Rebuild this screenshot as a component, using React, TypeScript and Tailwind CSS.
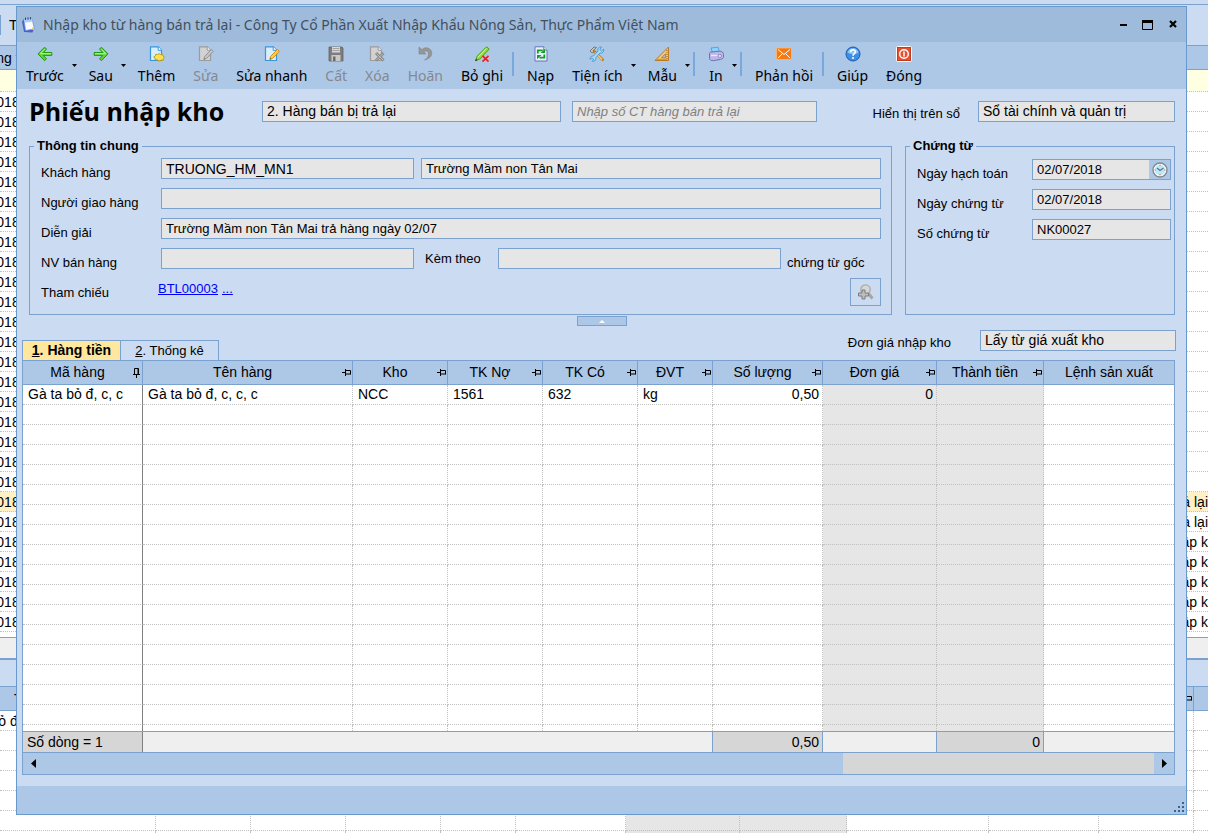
import React from 'react';

const line = 'border-[#7ba1cf]';
const field = 'h-[21px] min-w-0 appearance-none rounded-none border border-[#7ba1cf] bg-[#e6e6e6] px-1 text-black outline-none';

/* ---------- icons ---------- */

const Svg = ({ children }) => (
  <svg width="16" height="16" viewBox="0 0 16 16" className="block" aria-hidden="true">
    {children}
  </svg>
);

const ArrowLeft = () => (
  <Svg>
    <path d="M7.6 1.2 1 7.9l6.6 6.8 1.9-1.9-3.2-3.4h8.5V6.5H6.3l3.2-3.4z" fill="#5fd13c" stroke="#1f9a14" />
    <path d="M3 7.9 7.6 3.2M3.5 7.7h10.6" stroke="#b8f29a" fill="none" />
  </Svg>
);

const ArrowRight = () => (
  <Svg>
    <path d="M8.4 1.2 15 7.9l-6.6 6.8-1.9-1.9 3.2-3.4H1.2V6.5h8.5L6.5 3.1z" fill="#5fd13c" stroke="#1f9a14" />
    <path d="M8.4 3.2 12.8 7.7H2" stroke="#b8f29a" fill="none" />
  </Svg>
);

const Sheet = ({ gray }) => (
  <>
    <path
      d="M1.5.8h7.8l3.2 3.4v10.3h-11z"
      fill={gray ? '#d2d2d2' : '#d9eefc'}
      stroke={gray ? '#9c9c9c' : '#3795dc'}
      strokeWidth="1.2"
    />
    <path d="M9.2.8v3.5h3.4" fill={gray ? '#efefef' : '#fff'} stroke={gray ? '#9c9c9c' : '#3795dc'} />
  </>
);

const AddIcon = () => (
  <Svg>
    <Sheet gray={false} />
    <path d="m10 7.6 1.6 1.1 2-.3.3 1.6 1.6 1-1.3 1.4.2 1.9-2.2-.2-2.2 1-1.6-1.3-2.4.1.1-1.9L4.7 11l1.7-1.1.3-1.6 2 .2z" fill="#ffe24f" stroke="#bb9712" strokeWidth=".9" />
  </Svg>
);

const EditIcon = ({ gray }) => (
  <Svg>
    <Sheet gray={gray} />
    <path d="m13.3 3.5 2 1.8-6.6 7-2.9 1.2.8-3z" fill={gray ? '#c4c4c4' : '#ffd23c'} stroke={gray ? '#8f8f8f' : '#d08312'} strokeWidth=".9" />
    <path d="m5.8 13.5.5-1.5 1 .9z" fill={gray ? '#777' : '#53430e'} />
  </Svg>
);

const SaveIcon = () => (
  <Svg>
    <path d="M1 1h13l1 1v13H1z" fill="#7d7d7d" stroke="#666" strokeWidth=".8" />
    <path d="M4 1h8v5.5H4z" fill="#d8d8d8" />
    <path d="M4.5 2.5h7M4.5 4.5h7" stroke="#a3a3a3" />
    <path d="M3.5 9h9v6h-9z" fill="#c9c9c9" />
    <path d="M5 10.5h2.5V15H5z" fill="#6b6b6b" />
  </Svg>
);

const DeleteIcon = () => (
  <Svg>
    <Sheet gray />
    <path d="m7 7 7.5 7.5M14.5 7 7 14.5" stroke="#8a8a8a" strokeWidth="3" />
    <path d="m7.5 7.5 6.5 6.5M14 7.5 7.5 14" stroke="#c6c6c6" strokeWidth=".9" />
  </Svg>
);

const UndoIcon = () => (
  <Svg>
    <path d="M2 1v7h7L6.8 5.8C9.5 4.2 11.6 5.4 11.5 8c0 2.5-1.5 4.5-4 6 5-1.2 7.6-3.9 7.2-7.5C14.2 2 8.5.2 4.8 3.6z" fill="#969696" stroke="#858585" strokeWidth=".6" />
  </Svg>
);

const UnpostIcon = () => (
  <Svg>
    <path d="m12.5.8 2.7 2.2-9 9.8-4.2 1.7 1-4.2z" fill="#8be03c" stroke="#4a9e13" />
    <path d="m12.3 2.5-8.5 9" stroke="#cff99f" />
    <path d="m1 15.2.9-2.5 1.7 1.5z" fill="#333" />
    <path d="m8.5 9.8 6 5.7M14.5 9.8l-6 5.7" stroke="#f01818" strokeWidth="1.7" />
  </Svg>
);

const ReloadIcon = () => (
  <Svg>
    <path d="M2 .8h8.8l3.2 3.2v11H2z" fill="#eef4ff" stroke="#6672b8" />
    <path d="M10.8.8V4H14" fill="#fff" stroke="#6672b8" />
    <path d="M4.8 7.5V4.3h4.9M11.3 8.5v3.2H6.4" fill="none" stroke="#11a024" strokeWidth="1.8" />
    <path d="M7.5 7h4.5V2.8zM8.5 9H4v4.2z" fill="#11a024" />
  </Svg>
);

const ToolsIcon = () => (
  <Svg>
    <path d="m4.5 4.5 9.2 9.2" stroke="#b98432" strokeWidth="2.8" strokeLinecap="round" />
    <path d="m6 6.3 7.2 7.2" stroke="#ffd07a" strokeWidth="1.2" />
    <path d="M1 5 5 1l2.5.5L4 4.8l1.2 1.4L3 7z" fill="#c9c4bc" stroke="#6f685e" strokeWidth=".8" />
    <path d="M14.6 3.2 12.5 5l-1.7-1.5L12.5 1C9.5.6 8.3 3 9 5l-4.5 5C2.5 9.6.9 11 1 13.2l2-1.2 1.6 1.3-1.2 2c2.5.3 3.9-1.5 3.4-3.7L11 7c2.5.6 4.3-1.3 3.6-3.8z" fill="#a9dbf7" stroke="#3b90c8" strokeWidth=".8" />
  </Svg>
);

const TemplateIcon = () => (
  <Svg>
    <path d="M14.5 1v13.5H1z" fill="#f7c873" stroke="#b87a24" />
    <path d="M11.5 7.8v4H7.6z" fill="#adc7e7" stroke="#b87a24" strokeWidth=".9" />
    <path d="M13 4v9.5M3.5 13.3h10" stroke="#8f5b14" strokeDasharray="1 1" />
  </Svg>
);

const PrintIcon = () => (
  <Svg>
    <path d="m3 2 7-.8 1.5 5.3L5 8z" fill="#8fd3fb" stroke="#3f9ad6" strokeWidth=".8" />
    <path d="M1.5 7.5c0-1 1-1.5 2-1.5l8-.8c2.5 0 4 1.3 4 3.3v2.3c0 1.5-1.5 2.3-3 2.6l-7 1.2c-2.3.4-4-.6-4-2.4z" fill="#bbb7e6" stroke="#6b67ad" strokeWidth=".9" />
    <path d="M3 9.5h6.5" stroke="#ece9ff" strokeWidth="1.3" />
    <circle cx="11.8" cy="10" r="1.7" fill="#dedcf7" stroke="#7a76b8" strokeWidth=".7" />
  </Svg>
);

const MailIcon = () => (
  <Svg>
    <rect x=".5" y="2" width="15" height="11.5" fill="#f47a14" stroke="#ffb978" strokeWidth=".8" />
    <path d="m2 3.5 6 5 6-5M2 12.2l4.3-4.5M14 12.2 9.7 7.7" fill="none" stroke="#fff" />
  </Svg>
);

const HelpIcon = () => (
  <Svg>
    <circle cx="8" cy="8" r="7" fill="#3d8fe6" stroke="#1a5bac" />
    <path d="M2.5 6.8a5.6 5.6 0 0 1 11 0c-3 1.6-8 1.6-11 0z" fill="#8cc2f8" />
    <path d="M5.6 6.3c0-3.3 5-3.2 4.8-.3C10.3 7.6 8 7.7 8 9.7" fill="none" stroke="#fff" strokeWidth="1.6" />
    <circle cx="8" cy="12" r="1" fill="#fff" />
  </Svg>
);

const CloseIcon = () => (
  <Svg>
    <rect x=".5" y=".5" width="15" height="15" rx="1" fill="#e5502e" stroke="#fff" />
    <rect x="1.5" y="1.5" width="13" height="13" fill="none" stroke="#b93317" strokeWidth=".7" />
    <circle cx="8" cy="8" r="4.3" fill="none" stroke="#fff" strokeWidth="1.4" />
    <path d="M8 5.5v5" stroke="#fff" strokeWidth="1.5" />
  </Svg>
);

const AppIcon = () => (
  <svg width="16" height="18" viewBox="0 0 16 18" aria-hidden="true">
    <path d="M1 5.5 3 3l2 10.5 7.5.5-1 2.5-8.5-.5z" fill="#4a5fd0" />
    <path d="m3 3.5 8-1 2.5 10.5-9 1.5z" fill="#f8fbff" stroke="#6c8fdb" strokeWidth=".8" />
    <path d="M3 3.5 10.8 2.4l.8 3-8 1.3z" fill="#a7cdf3" />
    <path d="M4.5 1.5v2.5M7 1.3v2.5M9.5 1v2.5" stroke="#3d4a78" />
    <path d="m11.5 11 2 2.2-2.8.6z" fill="#f5c84c" />
  </svg>
);

const ClockIcon = () => (
  <Svg>
    <circle cx="8" cy="8" r="7" fill="#dff5fb" stroke="#85898f" strokeWidth="1.4" />
    <circle cx="8" cy="8" r="5.6" fill="#b9e9f7" stroke="#fff" strokeWidth=".8" />
    <path d="m5 6 3 2.5L11.5 6" fill="none" stroke="#56707d" strokeWidth="1.1" />
    <path d="M8 2.6v1.2M8 12v1.4M2.6 8h1.2M12.2 8h1.2" stroke="#d66" />
  </Svg>
);

const ZoomIcon = () => (
  <Svg>
    <path d="m10 9 4.5 5.5" stroke="#a6a6a6" strokeWidth="3" />
    <circle cx="7.5" cy="5.5" r="4.7" fill="#d6d6d6" stroke="#a9a9a9" strokeWidth="1.3" />
    <path d="M4 6h3v3h3.5v3H7v3H4v-3H.5V9H4z" fill="#bdbdbd" stroke="#7d7d7d" />
  </Svg>
);

const Pin = () => (
  <svg width="10" height="10" viewBox="0 0 10 10" className="shrink-0" aria-hidden="true">
    <path d="M0 4.5h3M3.5 1v7M3.5 2.5h5v4M3.5 6h5" fill="none" stroke="#000" />
  </svg>
);

const PinDown = () => (
  <svg width="10" height="10" viewBox="0 0 10 10" className="shrink-0" aria-hidden="true">
    <path d="M1 6.5h7M2.5 6V.5h4V6M6 1v5M4.5 7v3" fill="none" stroke="#000" />
  </svg>
);

const Caret = () => (
  <svg width="5" height="3" viewBox="0 0 5 3" className="mt-[22px] w-[5px]" aria-hidden="true">
    <path d="M0 0h5L2.5 3z" />
  </svg>
);

/* ---------- toolbar ---------- */

const tools = [
  { label: 'Trước', icon: <ArrowLeft />, caret: true },
  { label: 'Sau', icon: <ArrowRight />, caret: true },
  { label: 'Thêm', icon: <AddIcon /> },
  { label: 'Sửa', icon: <EditIcon gray />, disabled: true },
  { label: 'Sửa nhanh', icon: <EditIcon gray={false} /> },
  { label: 'Cất', icon: <SaveIcon />, disabled: true },
  { label: 'Xóa', icon: <DeleteIcon />, disabled: true },
  { label: 'Hoãn', icon: <UndoIcon />, disabled: true },
  { label: 'Bỏ ghi', icon: <UnpostIcon />, sep: true },
  { label: 'Nạp', icon: <ReloadIcon /> },
  { label: 'Tiện ích', icon: <ToolsIcon />, caret: true },
  { label: 'Mẫu', icon: <TemplateIcon />, caret: true, sep: true },
  { label: 'In', icon: <PrintIcon />, caret: true, sep: true },
  { label: 'Phản hồi', icon: <MailIcon />, sep: true },
  { label: 'Giúp', icon: <HelpIcon /> },
  { label: 'Đóng', icon: <CloseIcon /> },
];

function Toolbar() {
  return (
    <div className="flex h-[47px] shrink-0 items-start bg-[#adc7e7] font-['Noto_Sans',sans-serif] text-sm">
      {tools.map((t) => (
        <React.Fragment key={t.label}>
          <button type="button" disabled={t.disabled} className="flex flex-col items-center px-[9px] pt-1 whitespace-nowrap disabled:text-[#85898e]">
            {t.icon}
            <span className="mt-1 leading-5">{t.label}</span>
          </button>
          {t.caret && <span className="-ml-px w-2"><Caret /></span>}
          {t.sep && <span className="mt-2.5 mr-1 h-6 w-0.5 bg-[#7aa7dc]"></span>}
        </React.Fragment>
      ))}
    </div>
  );
}

/* ---------- detail grid ---------- */

const columns = [
  { title: 'Mã hàng', width: 'w-[120px]', value: 'Gà ta bỏ đ, c, c' },
  { title: 'Tên hàng', width: 'w-[210px]', value: 'Gà ta bỏ đ, c, c, c' },
  { title: 'Kho', width: 'w-[95px]', value: 'NCC' },
  { title: 'TK Nợ', width: 'w-[95px]', value: '1561' },
  { title: 'TK Có', width: 'w-[95px]', value: '632' },
  { title: 'ĐVT', width: 'w-[75px]', value: 'kg' },
  { title: 'Số lượng', width: 'w-[110px]', value: '0,50', right: true },
  { title: 'Đơn giá', width: 'w-[114px]', value: '0', right: true, locked: true },
  { title: 'Thành tiền', width: 'w-[107px]', value: '', right: true, locked: true },
  { title: 'Lệnh sản xuất', width: '', value: '' },
];

const emptyRows = Array.from({ length: 17 }, (_, i) => i);

const cellClass = (col, i) =>
  [
    'h-5 border-b border-b-[#c0c0c0] [border-bottom-style:dotted] p-0 leading-[19px] whitespace-nowrap',
    i === 0 ? 'border-r border-r-[#808080] [border-right-style:solid]' : '',
    i > 0 && i < 9 ? 'border-r border-r-[#c0c0c0] [border-right-style:dotted]' : '',
    col.right ? 'pr-[3px] text-right' : 'pl-[5px] text-left',
    col.locked ? 'bg-[#e6e6e6]' : '',
  ].join(' ');

function DetailGrid() {
  return (
    <div className={`flex min-h-0 flex-1 flex-col border ${line} bg-white text-sm`}>
      <div className="min-h-0 flex-1 overflow-hidden">
        <table className="w-full table-fixed border-separate border-spacing-0">
          <thead>
            <tr>
              {columns.map((c, i) => (
                <th key={c.title} className={`${c.width} h-6 border-b ${line} bg-[#adc7e7] p-0 font-normal ${i < 9 ? 'border-r' : ''}`}>
                  <div className="flex items-center">
                    <span className="flex-1 text-center leading-[23px] whitespace-nowrap">{c.title}</span>
                    {i === 0 && <PinDown />}
                    {i > 0 && i < 9 && <Pin />}
                  </div>
                </th>
              ))}
            </tr>
          </thead>
          <tbody>
            <tr>
              {columns.map((c, i) => (
                <td key={c.title} className={cellClass(c, i)}>{c.value}</td>
              ))}
            </tr>
            {emptyRows.map((r) => (
              <tr key={r}>
                {columns.map((c, i) => (
                  <td key={c.title} className={cellClass(c, i)}></td>
                ))}
              </tr>
            ))}
          </tbody>
        </table>
      </div>

      <table className={`w-full shrink-0 table-fixed border-separate border-spacing-0 border-y ${line}`}>
        <tbody>
          <tr>
            <td className="h-5 w-[120px] border-r border-[#808080] bg-[#d6d6d6] py-0 pr-0 pl-1 leading-5">Số dòng = 1</td>
            <td className={`w-[570px] border-r ${line} bg-[#efefef] p-0`}></td>
            <td className={`w-[110px] border-r ${line} bg-[#d6d6d6] py-0 pr-[3px] pl-0 text-right leading-5`}>0,50</td>
            <td className={`w-[114px] border-r ${line} bg-[#efefef] p-0`}></td>
            <td className={`w-[107px] border-r ${line} bg-[#d6d6d6] py-0 pr-[3px] pl-0 text-right leading-5`}>0</td>
            <td className="bg-[#efefef] p-0"></td>
          </tr>
        </tbody>
      </table>

      <div className="flex h-[21px] shrink-0 bg-[#adc7e7]">
        <button type="button" aria-label="Cuộn trái" className="flex w-5 items-center justify-center">
          <svg width="5" height="9" viewBox="0 0 5 9"><path d="M5 0v9L0 4.5z" /></svg>
        </button>
        <div className="flex flex-1 justify-end">
          <div className="w-[28%] bg-[#d6d6d6]"></div>
        </div>
        <button type="button" aria-label="Cuộn phải" className="flex w-5 items-center justify-center">
          <svg width="5" height="9" viewBox="0 0 5 9"><path d="M0 0v9l5-4.5z" /></svg>
        </button>
      </div>
    </div>
  );
}

/* ---------- list window that stays behind the voucher ---------- */

const listRight = { 20: 'ả lại', 21: 'ả lại', 22: 'ập k', 23: 'ập k', 24: 'ập k', 25: 'ập k', 26: 'ập k' };
const listRows = Array.from({ length: 27 }, (_, i) => i);
const lowerCols = ['w-[156px]', 'w-[95px]', 'w-[95px]', 'w-[95px]', 'w-[75px]', 'w-[110px]', 'w-[114px] bg-[#e6e6e6]', 'w-[107px] bg-[#e6e6e6]', 'w-[142px]', 'w-[110px]', 'w-[95px]'];

function ListWindow() {
  return (
    <div className="flex h-full flex-col overflow-hidden text-sm">
      <div className={`h-[5px] shrink-0 border-b ${line}`}></div>
      <div className="flex h-10 shrink-0 items-center">
        <span className="h-5 w-px bg-[#7ba1cf]"></span>
        <span className="pl-2">T</span>
      </div>
      <div className={`flex h-[25px] shrink-0 items-center border-y ${line} bg-[#adc7e7]`}>
        <span className="flex w-4 justify-center whitespace-nowrap">ng t</span>
      </div>
      <div className="h-[22px] shrink-0 border-b border-dotted border-[#c0c0c0] bg-[#ffffe1]"></div>
      {listRows.map((r) => (
        <div key={r} className={`flex h-5 shrink-0 items-center justify-between border-b border-dotted border-[#c0c0c0] ${r === 20 ? 'bg-[#fff0c6]' : 'bg-white'}`}>
          <span className="flex w-4 justify-center">018</span>
          <span className="flex w-6 justify-end whitespace-nowrap">{listRight[r]}</span>
        </div>
      ))}
      <div className="h-[5px] shrink-0 bg-white"></div>
      <div className={`h-[23px] shrink-0 border-t border-b-2 ${line} bg-[#efefef]`}></div>
      <div className="h-[26px] shrink-0"></div>
      <div className={`flex h-[25px] shrink-0 items-center justify-between border-y ${line} bg-[#adc7e7]`}>
        <span className="pl-3.5">T</span>
        <span className={`mr-3.5 flex h-full items-center border-r ${line}`}><Pin /></span>
      </div>
      {[0, 1, 2, 3, 4, 5, 6].map((r) => (
        <div key={r} className="flex h-5 shrink-0 bg-white">
          {lowerCols.map((w, i) => (
            <div key={i} className={`${w} shrink-0 border-r border-b border-dotted border-[#c0c0c0]`}>
              {r === 0 && i === 0 && <span className="flex w-4 justify-center whitespace-nowrap leading-5">ỏ đ</span>}
            </div>
          ))}
          <div className="flex-1 border-b border-dotted border-[#c0c0c0]"></div>
        </div>
      ))}
    </div>
  );
}

/* ---------- voucher window ---------- */

export default function App() {
  const rowLabel = 'w-[120px] shrink-0 pt-1 leading-[21px] whitespace-nowrap';
  const dateLabel = 'w-[115px] shrink-0 pt-1 leading-[21px] whitespace-nowrap';

  return (
    <div className="relative h-screen overflow-hidden bg-[#cbdbf1] font-['Liberation_Sans',Arial,sans-serif] text-[13px] text-black">
      <ListWindow />

      <div className="absolute top-1.5 right-[21px] bottom-[18px] left-4 flex flex-col border border-[#6799cc] bg-[#cbdbf1]">
        <header className="flex h-[35px] shrink-0 items-center bg-[#9ebbdb] pr-2 pl-1">
          <AppIcon />
          <h2 className="ml-1.5 flex-1 truncate font-['Noto_Sans',sans-serif] text-sm text-[#434f5c]">
            Nhập kho từ hàng bán trả lại - Công Ty Cổ Phần Xuất Nhập Khẩu Nông Sản, Thực Phẩm Việt Nam
          </h2>
          <div className="flex items-center gap-3.5">
            <button type="button" aria-label="Thu nhỏ">
              <svg width="8" height="10" viewBox="0 0 8 10"><path d="M0 4h7v2H0z" /></svg>
            </button>
            <button type="button" aria-label="Phóng to">
              <svg width="12" height="10" viewBox="0 0 12 10"><path d="M.5.5h10v9H.5z" fill="none" stroke="#000" /><path d="M0 0h11v3H0z" /></svg>
            </button>
            <button type="button" aria-label="Đóng cửa sổ">
              <svg width="10" height="10" viewBox="0 0 10 10"><path d="m2 1 6 6M8 1 2 7" stroke="#000" strokeWidth="2.2" /></svg>
            </button>
          </div>
        </header>

        <Toolbar />

        <div className="flex shrink-0 items-center pt-3 pr-[11px] pl-3">
          <h1 className="w-[233px] font-['Open_Sans',sans-serif] text-[25px] leading-[21px] font-bold whitespace-nowrap">Phiếu nhập kho</h1>
          <select aria-label="Loại phiếu nhập" className={`${field} w-[299px] text-sm leading-[19px]`}>
            <option>2. Hàng bán bị trả lại</option>
          </select>
          <input aria-label="Số chứng từ hàng bán trả lại" placeholder="Nhập số CT hàng bán trả lại" className={`${field} ml-[11px] w-[245px] placeholder:text-[#808080] placeholder:italic`} />
          <label htmlFor="book" className="mr-[18px] ml-auto pt-1 leading-[17px] whitespace-nowrap">Hiển thị trên sổ</label>
          <select id="book" className={`${field} w-[197px] text-sm leading-[19px]`}>
            <option>Sổ tài chính và quản trị</option>
          </select>
        </div>

        <div className="mt-3.5 flex shrink-0 gap-[13px] pr-[11px] pl-3">
          <fieldset className={`min-w-0 flex-1 border ${line} px-2.5 pb-2`}>
            <legend className="-ml-1.5 px-[3px] leading-5 font-bold">Thông tin chung</legend>
            <div className="flex flex-col gap-[9px] pt-0.5 pl-px">
              <div className="flex h-[21px] items-start">
                <label htmlFor="customer" className={rowLabel}>Khách hàng</label>
                <input id="customer" readOnly defaultValue="TRUONG_HM_MN1" className={`${field} w-[253px] text-sm`} />
                <input aria-label="Tên khách hàng" readOnly defaultValue="Trường Mầm non Tân Mai" className={`${field} ml-[7px] flex-1`} />
              </div>
              <div className="flex h-[21px] items-start">
                <label htmlFor="deliverer" className={rowLabel}>Người giao hàng</label>
                <input id="deliverer" readOnly className={`${field} flex-1`} />
              </div>
              <div className="flex h-[21px] items-start">
                <label htmlFor="memo" className={rowLabel}>Diễn giải</label>
                <input id="memo" readOnly defaultValue="Trường Mầm non Tân Mai trả hàng ngày 02/07" className={`${field} flex-1`} />
              </div>
              <div className="flex h-[21px] items-start">
                <label htmlFor="seller" className={rowLabel}>NV bán hàng</label>
                <input id="seller" readOnly className={`${field} w-[253px]`} />
                <label htmlFor="attach" className="w-[84px] shrink-0 pl-[11px] leading-[21px] whitespace-nowrap">Kèm theo</label>
                <input id="attach" readOnly className={`${field} flex-1`} />
                <span className="w-[100px] shrink-0 pt-1 pl-1.5 leading-[21px] whitespace-nowrap">chứng từ gốc</span>
              </div>
              <div className="flex h-7 items-start">
                <span className="w-[117px] shrink-0 pt-1 leading-[21px]">Tham chiếu</span>
                <a href="#" className="leading-[21px] text-[#0000ff] underline">BTL00003</a>
                <a href="#" className="ml-1 leading-[21px] text-[#0000ff] underline">...</a>
                <button type="button" aria-label="Xem chứng từ" className={`ml-auto flex h-7 w-[31px] items-center justify-center border ${line}`}>
                  <ZoomIcon />
                </button>
              </div>
            </div>
          </fieldset>

          <fieldset className={`w-[270px] min-w-0 shrink-0 border ${line} pr-[3px] pb-2 pl-[11px]`}>
            <legend className="-ml-[7px] px-[3px] leading-5 font-bold">Chứng từ</legend>
            <div className="flex flex-col gap-[9px] pt-[3px]">
              <div className="flex h-[21px] items-start">
                <label htmlFor="postDate" className={dateLabel}>Ngày hạch toán</label>
                <input id="postDate" readOnly defaultValue="02/07/2018" className={`${field} flex-1 border-r-0`} />
                <button type="button" aria-label="Chọn ngày" className={`flex h-[21px] w-[22px] items-center justify-center border border-l-0 ${line} bg-[#adc7e7]`}>
                  <ClockIcon />
                </button>
              </div>
              <div className="flex h-[21px] items-start">
                <label htmlFor="voucherDate" className={dateLabel}>Ngày chứng từ</label>
                <input id="voucherDate" readOnly defaultValue="02/07/2018" className={`${field} flex-1`} />
              </div>
              <div className="flex h-[21px] items-start">
                <label htmlFor="voucherNo" className={dateLabel}>Số chứng từ</label>
                <input id="voucherNo" readOnly defaultValue="NK00027" className={`${field} flex-1`} />
              </div>
            </div>
          </fieldset>
        </div>

        <button type="button" aria-label="Thu gọn" className={`mx-auto mt-px flex h-2.5 w-[50px] shrink-0 items-center justify-center border ${line} bg-[#adc7e7]`}>
          <svg width="6" height="3" viewBox="0 0 6 3"><path d="M0 3h6L3 0z" fill="#fff" /></svg>
        </button>

        <div className="flex shrink-0 items-end pt-1 pr-2.5 pl-[5px]">
          <div role="tablist" className="flex">
            <button type="button" role="tab" aria-selected="true" className={`h-5 w-[99px] border border-b-0 ${line} bg-[#ffe79e] text-sm leading-[19px] font-bold`}>
              <span className="underline">1</span>. Hàng tiền
            </button>
            <button type="button" role="tab" aria-selected="false" className={`h-5 w-[98px] border border-b-0 border-l-0 ${line} leading-[19px]`}>
              <span className="underline">2</span>. Thống kê
            </button>
          </div>
          <div className="mb-[9px] ml-auto flex items-center">
            <label htmlFor="price" className="mr-[29px] pt-1 leading-[17px] whitespace-nowrap">Đơn giá nhập kho</label>
            <select id="price" className={`${field} w-[196px] px-0.5 text-sm leading-[19px]`}>
              <option>Lấy từ giá xuất kho</option>
            </select>
          </div>
        </div>

        <div className="flex min-h-0 flex-1 flex-col pr-[11px] pb-[11px] pl-[5px]">
          <DetailGrid />
        </div>

        <footer className="flex h-7 shrink-0 items-end justify-end bg-[#adc7e7] p-px">
          <svg width="11" height="11" viewBox="0 0 11 11" fill="#3f5f8c" aria-hidden="true">
            <path d="M8 0h2v2H8zM8 4h2v2H8zM8 8h2v2H8zM4 4h2v2H4zM4 8h2v2H4zM0 8h2v2H0z" />
          </svg>
        </footer>
      </div>
    </div>
  );
}
